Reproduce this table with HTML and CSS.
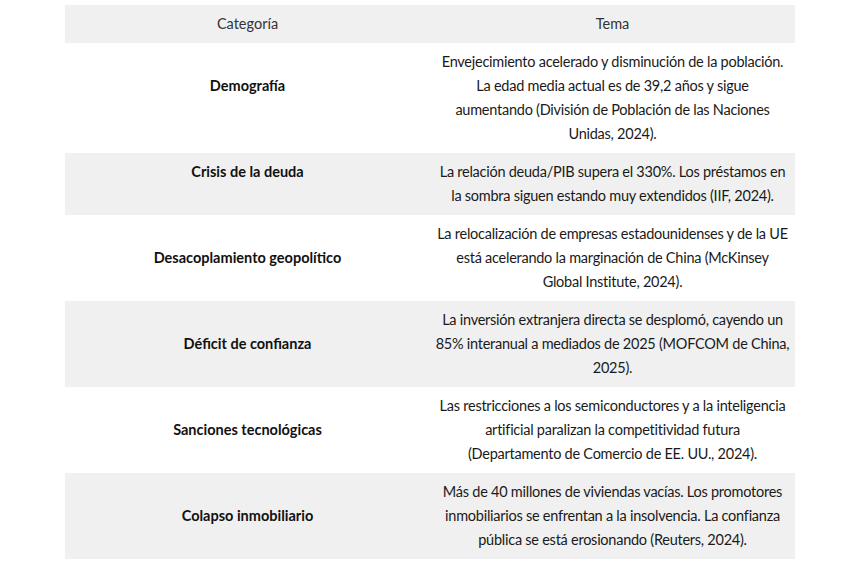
FILE: index.html
```html
<!DOCTYPE html>
<html lang="es">
<head>
<meta charset="utf-8">
<link rel="stylesheet" href="styles.css">
</head>
<body>
<table class="data">
  <thead>
    <tr><th>Categoría</th><th>Tema</th></tr>
  </thead>
  <tbody>
    <tr><td class="cat raised">Demografía</td><td class="topic">Envejecimiento acelerado y disminución de la población.<br>La edad media actual es de 39,2 años y sigue<br>aumentando (División de Población de las Naciones<br>Unidas, 2024).</td></tr>
    <tr class="alt"><td class="cat raised">Crisis de la deuda</td><td class="topic">La relación deuda/PIB supera el 330%. Los préstamos en<br>la sombra siguen estando muy extendidos (IIF, 2024).</td></tr>
    <tr><td class="cat">Desacoplamiento geopolítico</td><td class="topic">La relocalización de empresas estadounidenses y de la UE<br>está acelerando la marginación de China (McKinsey<br>Global Institute, 2024).</td></tr>
    <tr class="alt"><td class="cat">Déficit de confianza</td><td class="topic">La inversión extranjera directa se desplomó, cayendo un<br>85% interanual a mediados de 2025 (MOFCOM de China,<br>2025).</td></tr>
    <tr><td class="cat">Sanciones tecnológicas</td><td class="topic">Las restricciones a los semiconductores y a la inteligencia<br>artificial paralizan la competitividad futura<br>(Departamento de Comercio de EE. UU., 2024).</td></tr>
    <tr class="alt"><td class="cat">Colapso inmobiliario</td><td class="topic">Más de 40 millones de viviendas vacías. Los promotores<br>inmobiliarios se enfrentan a la insolvencia. La confianza<br>pública se está erosionando (Reuters, 2024).</td></tr>
  </tbody>
</table>
</body>
</html>
```
FILE: styles.css
```css
html, body {
  margin: 0;
  padding: 0;
  background: #ffffff;
}
body {
  padding: 5px 0 0 65px;
  font-family: Lato, "Noto Sans", sans-serif;
  font-size: 14.5px;
  color: #1a1a1a;
}
.data {
  width: 730px;
  border-collapse: collapse;
  table-layout: fixed;
}
.data th,
.data td {
  width: 50%;
  padding: 7px 10px;
  line-height: 24px;
  text-align: center;
  vertical-align: middle;
}
.data th {
  font-weight: 400;
  color: #333333;
  background: #f0f0f0;
}
.data td.cat {
  font-weight: 700;
  color: #111111;
}
.data td.cat.raised {
  padding-bottom: 31px;
}
.data td.topic {
  padding: 7px 2px;
  letter-spacing: -0.25px;
  white-space: nowrap;
}
.data tr.alt td {
  background: #f0f0f0;
}
```
